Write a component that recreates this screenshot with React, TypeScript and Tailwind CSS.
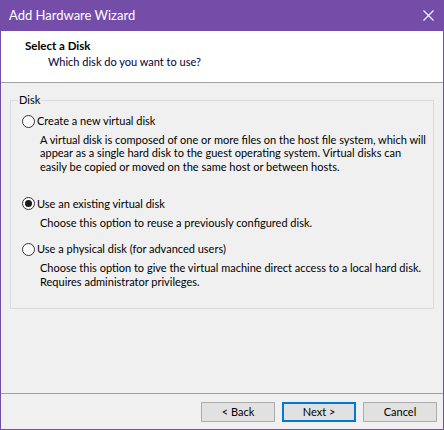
import React from "react";

function Radio({ checked }: { checked?: boolean }) {
  return (
    <span className="w-[13px] h-[13px] rounded-full border border-[#333333] bg-white flex items-center justify-center shrink-0">
      {checked && <span className="w-[7px] h-[7px] rounded-full bg-[#1a1a1a]" />}
    </span>
  );
}

function Btn({ label, primary }: { label: string; primary?: boolean }) {
  return (
    <div
      className={
        "w-[74px] h-[20px] bg-[#e1e1e1] flex items-center justify-center text-[11px] text-black " +
        (primary ? "border-2 border-[#0078d7]" : "border border-[#adadad]")
      }
    >
      {label}
    </div>
  );
}

export default function App() {
  return (
    <div
      className="w-[444px] h-[430px] bg-[#f0f0f0] border-x border-b border-[#744da9] flex flex-col text-black whitespace-nowrap"
      style={{ fontFamily: 'Lato, "Noto Sans", sans-serif' }}
    >
      <div className="h-[31px] shrink-0 bg-[#744da9] flex items-center justify-between pl-[8px] pr-[9px]">
        <span className="text-white text-[13px] leading-none">Add Hardware Wizard</span>
        <svg width="11" height="11" viewBox="0 0 11 11">
          <path d="M0.5 0.5 L10.5 10.5 M10.5 0.5 L0.5 10.5" stroke="white" strokeWidth="1.1" />
        </svg>
      </div>
      <div className="h-[51px] shrink-0 bg-white flex flex-col pl-[24px] pt-[7px]">
        <div className="text-[11.5px] font-bold leading-[16px]">Select a Disk</div>
        <div className="text-[11px] leading-[16px] pl-[23px] text-[#000033]">Which disk do you want to use?</div>
      </div>
      <div className="h-[311px] shrink-0 border-t border-[#a0a0a0] pt-[17px] px-[9px]">
        <div className="relative h-[209px] border border-[#dcdcdc] pl-[11px] pt-[13px] text-[11px]">
          <span className="absolute top-[-9px] left-[7px] px-[1px] bg-[#f0f0f0] leading-[16px]">Disk</span>
          <div className="flex items-center gap-[2px] h-[14px]">
            <Radio />
            <span>Create a new virtual disk</span>
          </div>
          <div className="pl-[18px] mt-[5px] leading-[13.3px]">
            A virtual disk is composed of one or more files on the host file system, which will
            <br />
            appear as a single hard disk to the guest operating system. Virtual disks can
            <br />
            easily be copied or moved on the same host or between hosts.
          </div>
          <div className="flex items-center gap-[2px] h-[14px] mt-[24px]">
            <Radio checked />
            <span>Use an existing virtual disk</span>
          </div>
          <div className="pl-[18px] mt-[5px] leading-[13.5px]">
            Choose this option to reuse a previously configured disk.
          </div>
          <div className="flex items-center gap-[2px] h-[14px] mt-[13px]">
            <Radio />
            <span>Use a physical disk (for advanced users)</span>
          </div>
          <div className="pl-[18px] mt-[5px] leading-[14px]">
            Choose this option to give the virtual machine direct access to a local hard disk.
            <br />
            Requires administrator privileges.
          </div>
        </div>
      </div>
      <div className="flex-1 border-t border-[#a0a0a0] flex justify-end items-start gap-[7px] pt-[8px] pr-[6px]">
        <Btn label="< Back" />
        <Btn label="Next >" primary />
        <Btn label="Cancel" />
      </div>
    </div>
  );
}
